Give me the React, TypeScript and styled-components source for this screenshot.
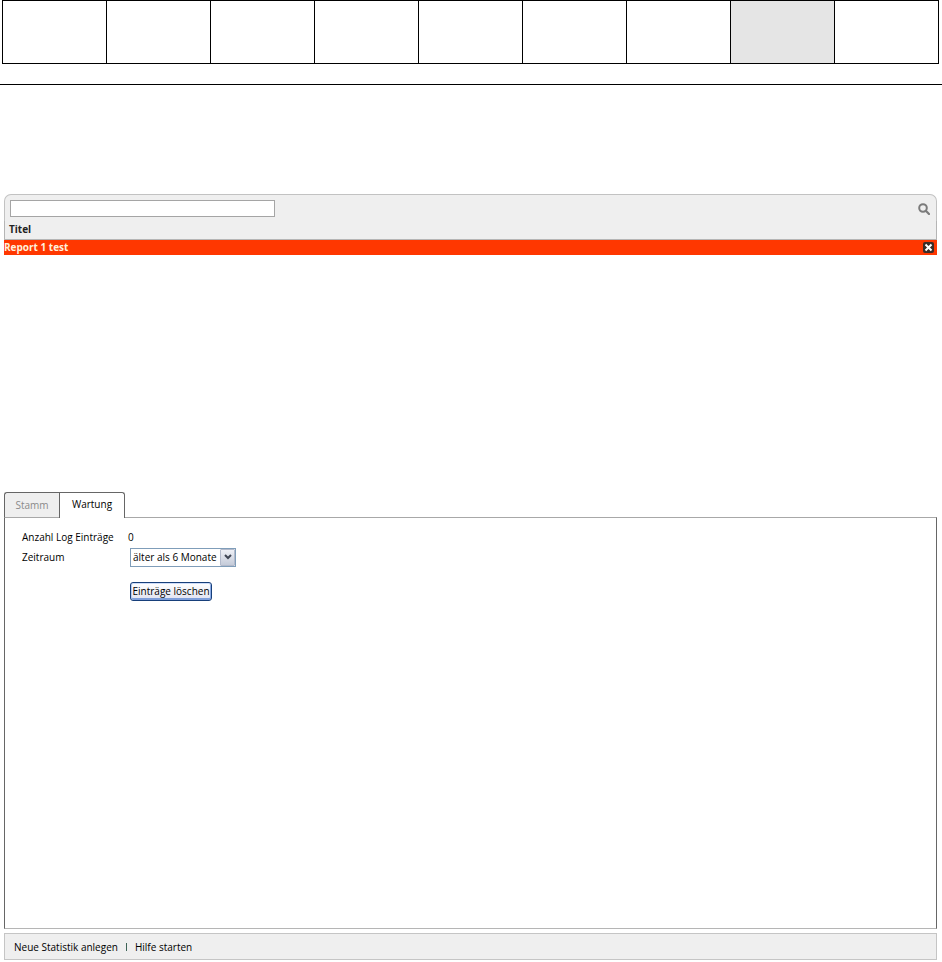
import React, { useState } from "react";
import styled, { createGlobalStyle } from "styled-components";

const GlobalStyle = createGlobalStyle`
  *, *::before, *::after { box-sizing: border-box; }
  body {
    margin: 0;
    background: #fff;
    color: #000;
    font: 10px/15px "Open Sans", "Trebuchet MS", sans-serif;
    font-variant-ligatures: none;
  }
  button, input, select { font: inherit; color: inherit; }
`;

const Page = styled.div`
  min-height: 100vh;
  display: flex;
  flex-direction: column;
`;

const HeaderTable = styled.table`
  width: calc(100% - 5px);
  margin: 0 3px 0 2px;
  height: 64px;
  border-collapse: separate;
  border-spacing: 0;
  table-layout: fixed;
  border: solid #000;
  border-width: 1px 0 0 1px;
`;

const HeaderCell = styled.td<{ $active: boolean }>`
  padding: 0;
  border: solid #000;
  border-width: 0 1px 1px 0;
  background: ${({ $active }) => ($active ? "#e5e5e5" : "#fff")};
`;

const Rule = styled.hr`
  width: 100%;
  margin: 20px 0 0;
  border: 0;
  border-top: 1px solid #000;
`;

const Workspace = styled.main`
  flex: 1;
  display: flex;
  flex-direction: column;
  padding: 109px 5px 2px 4px;
`;

const ReportList = styled.section`
  height: 298px;
`;

const SearchBar = styled.form`
  height: 27px;
  display: flex;
  align-items: flex-start;
  justify-content: space-between;
  padding: 5px 5px 0;
  background: #efefef;
  border: 1px solid #c2c2c2;
  border-bottom: 0;
  border-radius: 7px 7px 0 0;
`;

const SearchInput = styled.input`
  width: 265px;
  height: 17px;
  padding: 0 3px;
  background: #fff;
  border: 1px solid #a5a5a5;
  border-radius: 0;
`;

const IconButton = styled.button`
  display: flex;
  align-items: center;
  justify-content: center;
  padding: 0;
  border: 0;
  background: none;
  cursor: pointer;
`;

const SearchButton = styled(IconButton)`
  width: 14px;
  height: 18px;
`;

const ReportTable = styled.table`
  width: 100%;
  border-collapse: separate;
  border-spacing: 0;
`;

const TitleHead = styled.th`
  height: 19px;
  padding: 0 4px 2px;
  text-align: left;
  font-weight: 700;
  color: #222;
  background: #efefef;
  border: solid #b5b5b5;
  border-width: 0 1px 1px;
`;

const ReportCell = styled.td`
  height: 15px;
  padding: 0;
  background: #ff3700;
  color: #fff0dc;
  font-weight: 700;
`;

const ReportLine = styled.div`
  display: flex;
  align-items: center;
  justify-content: space-between;
  padding-right: 3px;
`;

const TabList = styled.div`
  display: flex;
  height: 25px;
`;

const Tab = styled.button<{ $active: boolean }>`
  width: ${({ $active }) => ($active ? "66px" : "55px")};
  height: ${({ $active }) => ($active ? "26px" : "25px")};
  padding: ${({ $active }) => ($active ? "0 0 2px" : "0")};
  border: 1px solid #666;
  border-right-width: ${({ $active }) => ($active ? "1px" : "0")};
  border-bottom: 0;
  border-radius: ${({ $active }) => ($active ? "0 3px 0 0" : "3px 0 0 0")};
  background: ${({ $active }) => ($active ? "#fff" : "#efefef")};
  color: ${({ $active }) => ($active ? "#000" : "#8a8a8a")};
  z-index: ${({ $active }) => ($active ? 1 : 0)};
  cursor: pointer;
`;

const TabPanel = styled.section`
  flex: 1;
  padding: 12px 17px;
  border: 1px solid #666;
  border-top-color: #a8a8a8;
  border-bottom-color: #b5b5b5;
`;

const Fields = styled.div`
  display: grid;
  grid-template-columns: 108px max-content;
  grid-template-rows: 15px 20px;
  row-gap: 2px;
  align-items: center;
  margin-bottom: 15px;
`;

const Count = styled.output`
  margin-left: -2px;
`;

const SelectFrame = styled.div`
  position: relative;
  width: 106px;
  height: 19px;
`;

const PeriodSelect = styled.select`
  width: 100%;
  height: 100%;
  padding: 0 15px 0 2px;
  appearance: none;
  background: #fff;
  border: 1px solid #7f9db9;
  border-radius: 0;
`;

const SelectArrow = styled.span`
  position: absolute;
  top: 1px;
  right: 1px;
  bottom: 1px;
  width: 15px;
  display: flex;
  align-items: center;
  justify-content: center;
  pointer-events: none;
  border: 1px solid #b3bacb;
  border-radius: 1px;
  background: linear-gradient(#eef0f6, #c5cbd9);
`;

const DeleteButton = styled.button`
  width: 82px;
  height: 19px;
  margin-left: 108px;
  padding: 0;
  white-space: nowrap;
  border: 1px solid #173f7a;
  border-radius: 3px;
  background: linear-gradient(#fff, #e0e2f0);
  box-shadow: inset 0 1px #cddcf8, inset 1px 0 #b5cbf0, inset -1px 0 #8aabe6, inset 0 -2px #7f9fdb;
  cursor: pointer;
`;

const Footer = styled.nav`
  height: 27px;
  margin-top: 4px;
  padding: 1px 9px 0;
  display: flex;
  align-items: center;
  gap: 8px;
  background: #efefef;
  border: 1px solid #c5c5c5;
`;

const FooterLink = styled.a`
  color: inherit;
  text-decoration: none;
`;

const Separator = styled.span`
  width: 1px;
  height: 8px;
  background: #3c6356;
`;

const headerSlots = Array.from({ length: 9 }, (_, i) => i);

export default function App() {
  const [tab, setTab] = useState("Wartung");
  return (
    <Page>
      <GlobalStyle />
      <HeaderTable>
        <tbody>
          <tr>
            {headerSlots.map((i) => (
              <HeaderCell key={i} $active={i === 7} />
            ))}
          </tr>
        </tbody>
      </HeaderTable>
      <Rule />
      <Workspace>
        <ReportList>
          <SearchBar onSubmit={(e) => e.preventDefault()}>
            <SearchInput type="text" aria-label="Titel" />
            <SearchButton type="submit" aria-label="Suchen">
              <svg width="12" height="12" viewBox="0 0 12 12" fill="none" stroke="#7b7b7b">
                <circle cx="5" cy="5" r="3.8" strokeWidth="2" />
                <path d="M7.8 7.8 11 11" strokeWidth="2.2" strokeLinecap="round" />
              </svg>
            </SearchButton>
          </SearchBar>
          <ReportTable>
            <thead>
              <tr>
                <TitleHead scope="col">Titel</TitleHead>
              </tr>
            </thead>
            <tbody>
              <tr>
                <ReportCell>
                  <ReportLine>
                    Report 1 test
                    <IconButton type="button" aria-label="Report 1 test entfernen">
                      <svg width="11" height="11" viewBox="0 0 11 11">
                        <rect width="11" height="11" rx="2" fill="#3a2c27" />
                        <path d="m2.5 2.5 6 6M8.5 2.5l-6 6" stroke="#fff" strokeWidth="2" />
                      </svg>
                    </IconButton>
                  </ReportLine>
                </ReportCell>
              </tr>
            </tbody>
          </ReportTable>
        </ReportList>
        <TabList role="tablist">
          {["Stamm", "Wartung"].map((name) => (
            <Tab
              key={name}
              type="button"
              role="tab"
              aria-selected={tab === name}
              $active={tab === name}
              onClick={() => setTab(name)}
            >
              {name}
            </Tab>
          ))}
        </TabList>
        <TabPanel role="tabpanel">
          <Fields>
            <label htmlFor="count">Anzahl Log Einträge</label>
            <Count id="count">0</Count>
            <label htmlFor="period">Zeitraum</label>
            <SelectFrame>
              <PeriodSelect id="period">
                <option>älter als 6 Monate</option>
              </PeriodSelect>
              <SelectArrow>
                <svg width="8" height="6" viewBox="0 0 8 6" fill="none" stroke="#3f4654" strokeWidth="2">
                  <path d="m1 1 3 3 3-3" />
                </svg>
              </SelectArrow>
            </SelectFrame>
          </Fields>
          <DeleteButton type="button">Einträge löschen</DeleteButton>
        </TabPanel>
        <Footer>
          <FooterLink href="#neu">Neue Statistik anlegen</FooterLink>
          <Separator />
          <FooterLink href="#hilfe">Hilfe starten</FooterLink>
        </Footer>
      </Workspace>
    </Page>
  );
}
